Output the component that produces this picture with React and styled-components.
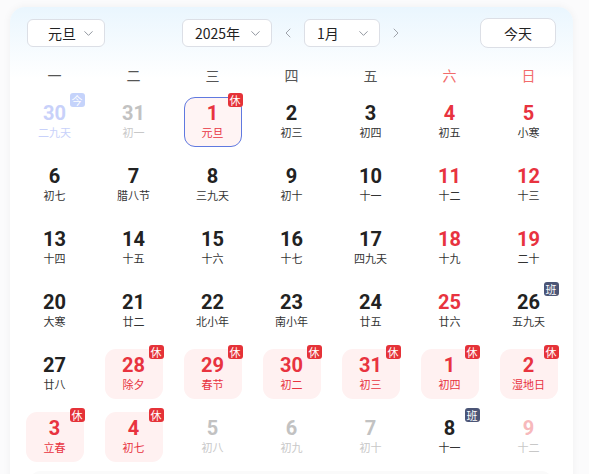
import React from 'react';
import styled, { createGlobalStyle } from 'styled-components';
import { ChevronDown, ChevronLeft, ChevronRight } from 'lucide-react';

const GlobalStyle = createGlobalStyle`
    body {
        margin: 0;
        background: #fbfbfc;
        font-family: "Noto Sans CJK SC", "Noto Sans", sans-serif;
    }
`;

const Card = styled.div`
    margin: 7px 16px 0 10px;
    height: 520px;
    background: linear-gradient(180deg, #eaf6fe 0, #ffffff 72px);
    border-radius: 15px;
    box-shadow: 0 0 8px rgba(0, 0, 0, 0.05);
    padding-top: 11px;
    box-sizing: border-box;
`;

const Header = styled.div`
    display: flex;
    align-items: center;
    height: 30px;
    padding: 0 17px;
`;

const Select = styled.div`
    display: flex;
    align-items: center;
    justify-content: space-between;
    box-sizing: border-box;
    width: ${(p) => p.$w}px;
    height: 28px;
    padding: 0 8px 0 ${(p) => p.$pl}px;
    background: #fff;
    border: 1px solid #dcdfe6;
    border-radius: 6px;
    font-size: 14px;
    color: #222;
`;

const Middle = styled.div`
    display: flex;
    align-items: center;
    gap: 8px;
    margin-left: 77px;
`;

const Arrow = styled.span`
    display: flex;
    color: #a0a4ab;
`;

const TodayBtn = styled.div`
    margin-left: auto;
    width: 76px;
    height: 30px;
    box-sizing: border-box;
    border: 1px solid #dcdfe6;
    border-radius: 8px;
    background: #fff;
    display: flex;
    align-items: center;
    justify-content: center;
    font-size: 14px;
    color: #222;
`;

const Weekdays = styled.div`
    display: grid;
    grid-template-columns: repeat(7, 1fr);
    padding: 0 5px;
    margin-top: 12px;
    height: 30px;
`;

const Weekday = styled.div`
    display: flex;
    align-items: center;
    justify-content: center;
    font-size: 14px;
    color: ${(p) => (p.$weekend ? '#f26b6b' : '#555')};
`;

const Grid = styled.div`
    display: grid;
    grid-template-columns: repeat(7, 1fr);
    grid-auto-rows: 63px;
    padding: 0 5px;
`;

const Cell = styled.div`
    display: flex;
    align-items: center;
    justify-content: center;
`;

const Box = styled.div`
    position: relative;
    width: 58px;
    height: 50px;
    box-sizing: border-box;
    padding-top: 4px;
    border-radius: 11px;
    display: flex;
    flex-direction: column;
    align-items: center;
    gap: 1px;
    background: ${(p) => (p.$selected ? '#fff4f4' : p.$rest ? '#fff1f1' : 'transparent')};
    border: 1px solid ${(p) => (p.$selected ? '#6079e0' : 'transparent')};
`;

const Num = styled.div`
    font-family: Roboto, "Noto Sans", sans-serif;
    font-weight: 700;
    font-size: 20px;
    line-height: 22px;
    color: ${(p) => p.$c};
`;

const Lunar = styled.div`
    font-size: 11px;
    line-height: 14px;
    color: ${(p) => p.$c};
`;

const Badge = styled.span`
    position: absolute;
    top: -5px;
    right: -2px;
    width: 15px;
    height: 14px;
    border-radius: 3px;
    background: ${(p) => p.$bg};
    color: #fff;
    font-size: 11px;
    line-height: 14px;
    text-align: center;
`;

const Footer = styled.div`
    margin: 3px 21px 0 20px;
    height: 40px;
    background: #fafafa;
    border-radius: 10px;
`;

const RED = '#e8333f';
const DARK = '#222';

// kind: n normal, w weekend, h holiday(休), s selected, o other month, t today, p other-month weekend, b work day(班)
const days = [
    [30, '二九天', 't'], [31, '初一', 'o'], [1, '元旦', 's'], [2, '初三', 'n'], [3, '初四', 'n'], [4, '初五', 'w'], [5, '小寒', 'w'],
    [6, '初七', 'n'], [7, '腊八节', 'n'], [8, '三九天', 'n'], [9, '初十', 'n'], [10, '十一', 'n'], [11, '十二', 'w'], [12, '十三', 'w'],
    [13, '十四', 'n'], [14, '十五', 'n'], [15, '十六', 'n'], [16, '十七', 'n'], [17, '四九天', 'n'], [18, '十九', 'w'], [19, '二十', 'w'],
    [20, '大寒', 'n'], [21, '廿二', 'n'], [22, '北小年', 'n'], [23, '南小年', 'n'], [24, '廿五', 'n'], [25, '廿六', 'w'], [26, '五九天', 'b'],
    [27, '廿八', 'n'], [28, '除夕', 'h'], [29, '春节', 'h'], [30, '初二', 'h'], [31, '初三', 'h'], [1, '初四', 'h'], [2, '湿地日', 'h'],
    [3, '立春', 'h'], [4, '初七', 'h'], [5, '初八', 'o'], [6, '初九', 'o'], [7, '初十', 'o'], [8, '十一', 'b'], [9, '十二', 'p'],
];

const colors = {
    n: [DARK, '#333'],
    w: [RED, '#333'],
    h: [RED, RED],
    s: [RED, RED],
    o: ['#c2c2c2', '#c8c8c8'],
    t: ['#c8d1fa', '#c8d1fa'],
    p: ['#f7b9bc', '#c8c8c8'],
    b: [DARK, '#333'],
};

const badges = {
    h: ['休', '#e53238'],
    s: ['休', '#e53238'],
    b: ['班', '#4b5576'],
    t: ['今', '#c5d3fb'],
};

const weekdays = ['一', '二', '三', '四', '五', '六', '日'];

const App = () => {
    return (
        <>
            <GlobalStyle />
            <Card>
                <Header>
                    <Select $w={78} $pl={20}>
                        元旦
                        <ChevronDown size={15} strokeWidth={1.5} color="#8a8f99" />
                    </Select>
                    <Middle>
                        <Select $w={90} $pl={12}>
                            2025年
                            <ChevronDown size={15} strokeWidth={1.5} color="#8a8f99" />
                        </Select>
                        <Arrow>
                            <ChevronLeft size={16} strokeWidth={1.5} />
                        </Arrow>
                        <Select $w={76} $pl={12}>
                            1月
                            <ChevronDown size={15} strokeWidth={1.5} color="#8a8f99" />
                        </Select>
                        <Arrow>
                            <ChevronRight size={16} strokeWidth={1.5} />
                        </Arrow>
                    </Middle>
                    <TodayBtn>今天</TodayBtn>
                </Header>
                <Weekdays>
                    {weekdays.map((w, i) => (
                        <Weekday key={w} $weekend={i > 4}>
                            {w}
                        </Weekday>
                    ))}
                </Weekdays>
                <Grid>
                    {days.map(([d, lunar, kind], i) => {
                        const [nc, lc] = colors[kind];
                        const badge = badges[kind];
                        return (
                            <Cell key={i}>
                                <Box $selected={kind === 's'} $rest={kind === 'h'}>
                                    <Num $c={nc}>{d}</Num>
                                    <Lunar $c={lc}>{lunar}</Lunar>
                                    {badge && <Badge $bg={badge[1]}>{badge[0]}</Badge>}
                                </Box>
                            </Cell>
                        );
                    })}
                </Grid>
                <Footer />
            </Card>
        </>
    );
};

export default App;
